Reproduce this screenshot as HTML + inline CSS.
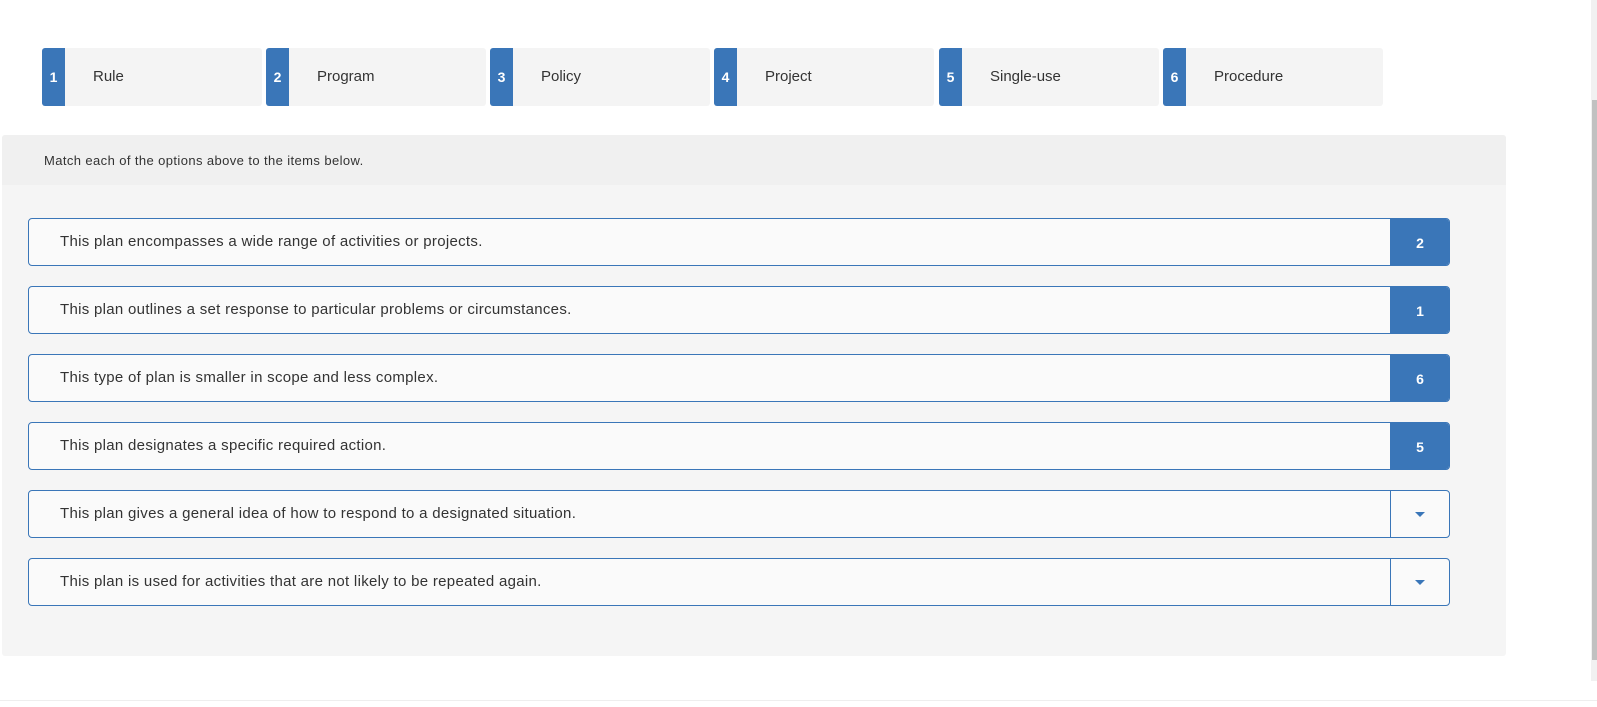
<!DOCTYPE html>
<html><head><style>
*{box-sizing:border-box;margin:0;padding:0}
body{width:1597px;height:707px;background:#fff;font-family:"Liberation Sans",sans-serif;color:#333;position:relative;overflow:hidden}
.tile{position:absolute;top:48px;width:220px;height:58px;background:#f4f4f4;border-radius:3px;overflow:hidden}
.tile .n{position:absolute;left:0;top:0;width:23px;height:58px;background:#3a76b8;color:#fff;font-weight:bold;font-size:14px;text-align:center;line-height:58px}
.tile .t{position:absolute;left:51px;top:0;line-height:58px;font-size:15px;color:#333}
.panel{position:absolute;left:2px;top:135px;width:1504px;height:521px;background:#f5f5f5;border-radius:3px}
.hdr{height:50px;background:#f0f0f0;font-size:13px;letter-spacing:0.4px;line-height:51px;padding-left:42px;color:#333;border-radius:3px 3px 0 0}
.row{position:absolute;left:26px;width:1422px;height:48px;border:1px solid #3a76b8;border-radius:4px;background:#fafafa;overflow:hidden}
.row .t{position:absolute;left:31px;top:0;line-height:46px;font-size:15px;letter-spacing:0.3px;color:#333}
.row .b{position:absolute;right:0;top:0;width:59px;height:46px;border-left:1px solid #3a76b8;text-align:center;line-height:48px;font-size:14px;font-weight:bold;color:#fff}
.row .b.f{background:#3a76b8}
.caret{position:absolute;left:24px;top:21px;width:0;height:0;border-left:5px solid transparent;border-right:5px solid transparent;border-top:5px solid #3a76b8}
</style></head><body>
<div class="tile" style="left:42px"><div class="n">1</div><div class="t">Rule</div></div>
<div class="tile" style="left:266px"><div class="n">2</div><div class="t">Program</div></div>
<div class="tile" style="left:490px"><div class="n">3</div><div class="t">Policy</div></div>
<div class="tile" style="left:714px"><div class="n">4</div><div class="t">Project</div></div>
<div class="tile" style="left:939px"><div class="n">5</div><div class="t">Single-use</div></div>
<div class="tile" style="left:1163px"><div class="n">6</div><div class="t">Procedure</div></div>
<div class="panel">
<div class="hdr">Match each of the options above to the items below.</div>
<div class="row" style="top:83px"><div class="t">This plan encompasses a wide range of activities or projects.</div><div class="b f">2</div></div>
<div class="row" style="top:151px"><div class="t">This plan outlines a set response to particular problems or circumstances.</div><div class="b f">1</div></div>
<div class="row" style="top:219px"><div class="t">This type of plan is smaller in scope and less complex.</div><div class="b f">6</div></div>
<div class="row" style="top:287px"><div class="t">This plan designates a specific required action.</div><div class="b f">5</div></div>
<div class="row" style="top:355px"><div class="t">This plan gives a general idea of how to respond to a designated situation.</div><div class="b"><div class="caret"></div></div></div>
<div class="row" style="top:423px"><div class="t">This plan is used for activities that are not likely to be repeated again.</div><div class="b"><div class="caret"></div></div></div>
</div>
<div style="position:absolute;left:1591px;top:0;width:6px;height:681px;background:#f1f1f1"></div>
<div style="position:absolute;left:1592px;top:100px;width:5px;height:560px;background:#c1c1c1"></div>
<div style="position:absolute;left:0;top:700px;width:1597px;height:1px;background:#eee"></div>
</body></html>
